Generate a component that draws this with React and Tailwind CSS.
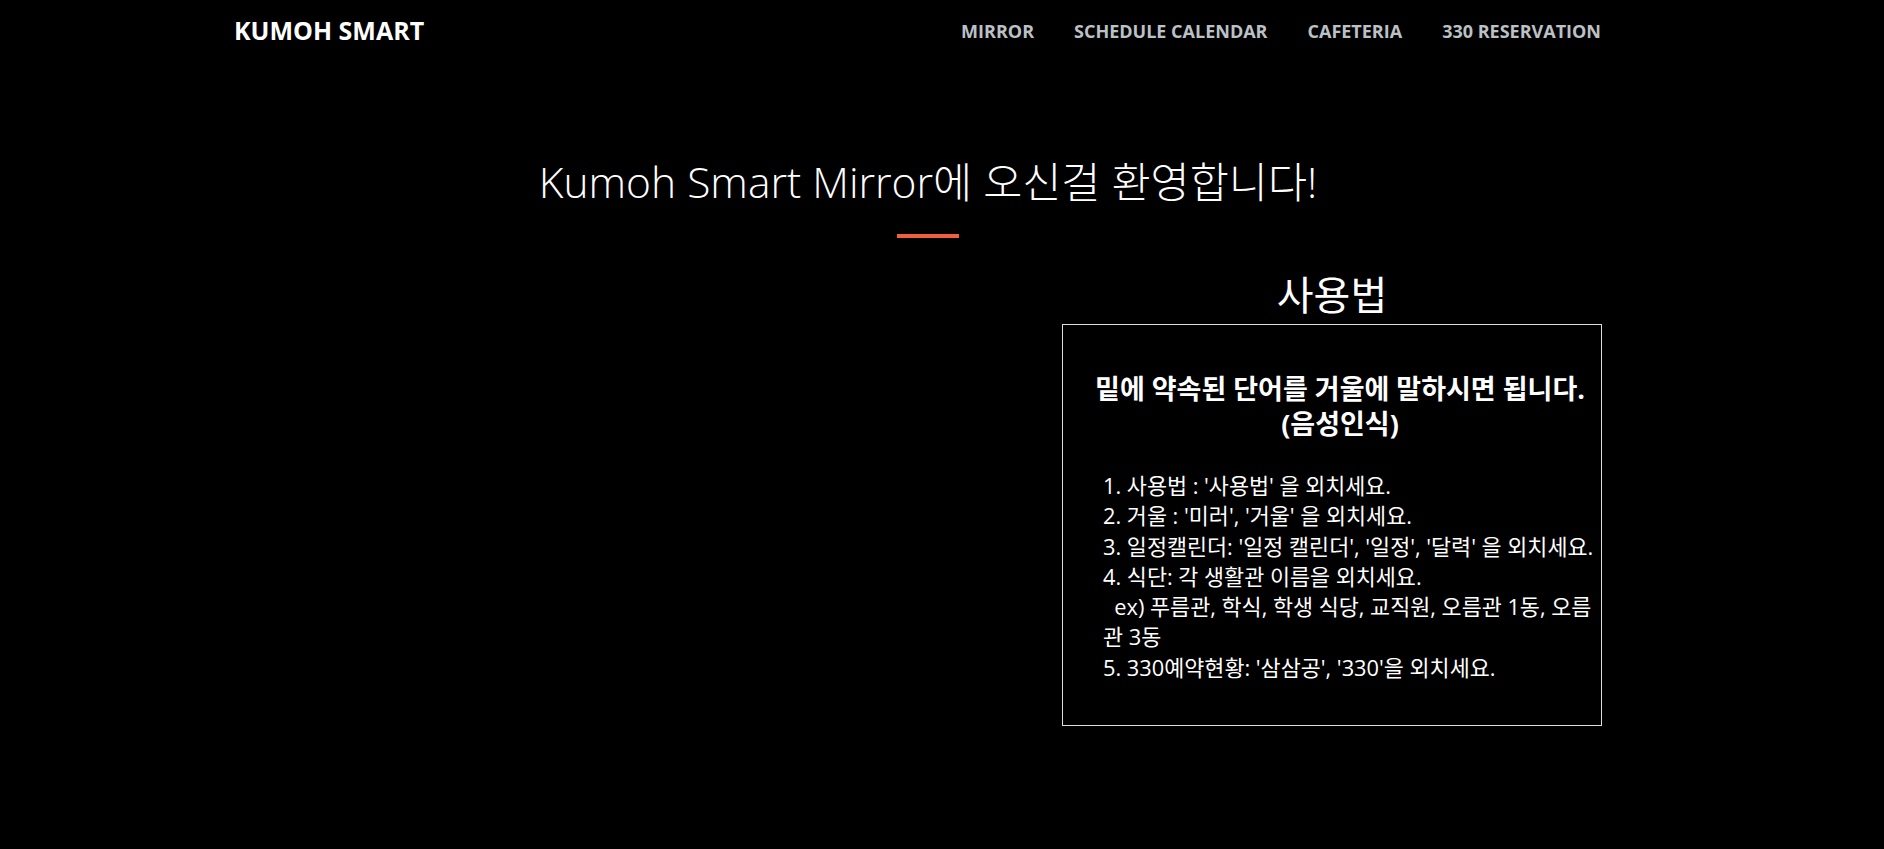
import React from "react";

const navItems = ["Mirror", "Schedule Calendar", "Cafeteria", "330 Reservation"];

const usage = [
  "1. 사용법 : '사용법' 을 외치세요.",
  "2. 거울 : '미러', '거울' 을 외치세요.",
  "3. 일정캘린더: '일정 캘린더', '일정', '달력' 을 외치세요.",
  "4. 식단: 각 생활관 이름을 외치세요.",
  "\u00a0\u00a0ex) 푸름관, 학식, 학생 식당, 교직원, 오름관 1동, 오름",
  "관 3동",
  "5. 330예약현황: '삼삼공', '330'을 외치세요.",
];

const font = { fontFamily: '"Open Sans", "Noto Sans CJK KR", sans-serif' };

export default function App() {
  return (
    <div className="min-h-[849px] bg-black text-white" style={font}>
      <nav className="flex h-[62px] items-center justify-between pl-[234px] pr-[283px]">
        <a className="text-[25px] font-bold text-white">KUMOH SMART</a>
        <ul className="flex items-center gap-[40px]">
          {navItems.map((item) => (
            <li key={item} className="text-[18px] font-bold uppercase text-[#bcc1c6]">
              {item}
            </li>
          ))}
        </ul>
      </nav>

      <section className="pr-[28px] pt-[91px] text-center">
        <h2 className="text-[42.5px] font-light leading-[58px]">Kumoh Smart Mirror에 오신걸 환영합니다!</h2>
        <hr className="mx-auto mt-[23px] h-[4px] w-[62px] border-0 bg-[#f05f40]" />
      </section>

      <div className="flex pl-[1062px] pt-[30px]">
        <div className="w-[540px]">
          <h3 className="text-center text-[40px] leading-[54px]">사용법</h3>
          <div className="mt-[2px] border border-[#dddddd] pb-[42px] pt-[46px]">
            <h4 className="pl-[16px] text-center text-[27px] font-bold leading-[35px]">
              밑에 약속된 단어를 거울에 말하시면 됩니다.
              <br />
              (음성인식)
            </h4>
            <p className="mt-[30px] pl-[40px] pr-[2px] text-[21.8px] leading-[30.3px]">
              {usage.map((line) => (
                <span key={line} className="block whitespace-nowrap">
                  {line}
                </span>
              ))}
            </p>
          </div>
        </div>
      </div>
    </div>
  );
}
